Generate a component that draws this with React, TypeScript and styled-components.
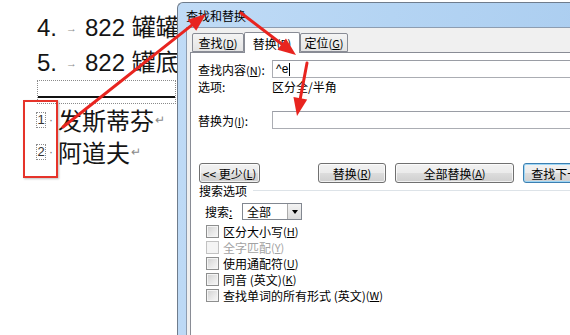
import React from "react";
import styled, { createGlobalStyle } from "styled-components";

const GlobalStyle = createGlobalStyle`
  html, body {
    margin: 0;
    padding: 0;
    background: #fff;
    overflow: hidden;
  }
  body {
    font-family: "Noto Sans CJK SC", sans-serif;
  }
`;

const Screen = styled.div`
  position: relative;
  width: 570px;
  height: 335px;
  overflow: hidden;
  display: flex;
  background: #fff;
`;

/* ---------- 文档区 ---------- */
const Doc = styled.div`
  flex: none;
  width: 177px;
  padding: 10px 0 0 37px;
  box-sizing: border-box;
  overflow: hidden;
  white-space: nowrap;
  font-family: "Liberation Sans", "Noto Sans CJK SC", sans-serif;
  color: #151515;
`;

const DocLine = styled.div`
  height: 35px;
  font-size: 24px;
  line-height: 35px;
`;

const ListNum = styled.span`
  display: inline-block;
  width: 29px;
`;

const TabMark = styled.span`
  display: inline-block;
  width: 19px;
  font-size: 11px;
  color: #8a8a8a;
  vertical-align: 4px;
`;

const TableFrame = styled.div`
  width: 139px;
  height: 24px;
  box-sizing: border-box;
  border: 1px dotted #8a8a8a;
`;

const TableRule = styled.div`
  margin-top: 15px;
  height: 2px;
  background: #111;
`;

const ListItem = styled.div`
  display: flex;
  align-items: center;
  height: 32px;
`;

const NumBox = styled.span`
  flex: none;
  margin-left: -1px;
  width: 10px;
  height: 16px;
  box-sizing: border-box;
  border: 1px dotted #8c8c8c;
  font-size: 13px;
  line-height: 14px;
  text-align: center;
  color: #333;
`;

const NumDot = styled.span`
  flex: none;
  width: 12px;
  padding-left: 3px;
  box-sizing: border-box;
  font-size: 12px;
  color: #777;
`;

const ItemText = styled.span`
  font-size: 24px;
  line-height: 32px;
  font-family: "Noto Sans CJK SC", sans-serif;
`;

const ParaMark = styled.span`
  font-size: 12px;
  color: #8a8a8a;
  margin-left: 1px;
  vertical-align: -4px;
`;

/* ---------- 对话框 ---------- */
const Dialog = styled.div`
  flex: none;
  width: 420px;
  height: 340px;
  margin-top: 2px;
  display: flex;
  flex-direction: column;
  box-sizing: border-box;
  padding-left: 8px;
  border: 1px solid #6f7c8c;
  border-right: none;
  border-radius: 6px 0 0 0;
  background: linear-gradient(100deg, #c0dbf6 0%, #b4d4f3 45%, #a9ccef 100%);
  font-family: "Noto Sans CJK SC", sans-serif;
  font-size: 12px;
  color: #000;
`;

const TitleBar = styled.div`
  height: 24px;
  display: flex;
  align-items: center;
  font-size: 12px;
`;

const Client = styled.div`
  flex: 1;
  display: flex;
  flex-direction: column;
  background: #f0f0f0;
  border-left: 1px solid #8d9db1;
  border-top: 1px solid #8d9db1;
`;

const TabRow = styled.div`
  display: flex;
  align-items: flex-end;
  height: 24px;
  padding-left: 5px;
`;

const Tab = styled.div<{ $active?: boolean; $w: number }>`
  position: relative;
  z-index: ${(p) => (p.$active ? 1 : 0)};
  width: ${(p) => p.$w}px;
  height: ${(p) => (p.$active ? 21 : 19)}px;
  margin-bottom: ${(p) => (p.$active ? -1 : 0)}px;
  box-sizing: border-box;
  display: flex;
  align-items: center;
  justify-content: center;
  border: 1px solid #898c95;
  border-bottom: ${(p) => (p.$active ? "none" : "1px solid #898c95")};
  border-radius: 2px 2px 0 0;
  background: ${(p) =>
    p.$active ? "#fff" : "linear-gradient(#f4f4f4, #e4e4e4)"};
  font-size: 12px;
  white-space: nowrap;
`;

const Key = styled.span`
  font-size: 11px;
  u {
    text-underline-offset: 1px;
  }
`;

const Panel = styled.div`
  flex: 1;
  margin-left: 3px;
  padding: 7px 0 0 7px;
  background: #fff;
  border: 1px solid #898c95;
  border-right: none;
`;

const FieldRow = styled.div<{ $gap?: number }>`
  display: flex;
  align-items: center;
  height: 18px;
  margin-top: ${(p) => p.$gap ?? 0}px;
`;

const FieldLabel = styled.span`
  flex: none;
  width: 74px;
  white-space: nowrap;
`;

const TextBox = styled.div`
  flex: 1;
  height: 18px;
  box-sizing: border-box;
  display: flex;
  align-items: center;
  padding-left: 3px;
  border: 1px solid #abadb3;
  border-top-color: #9a9da5;
  background: #fff;
  font-family: "Liberation Sans", sans-serif;
  font-size: 12px;
`;

const Caret = styled.span`
  display: inline-block;
  width: 1px;
  height: 13px;
  margin-left: 1px;
  background: #000;
`;

const OptionRow = styled.div`
  display: flex;
  align-items: center;
  height: 14px;
  margin-top: 1px;
`;

const ButtonRow = styled.div`
  display: flex;
  margin-top: 34px;
  padding-left: 1px;
`;

const Button = styled.div<{ $w: number; $ml?: number; $default?: boolean }>`
  flex: none;
  width: ${(p) => p.$w}px;
  height: 20px;
  margin-left: ${(p) => p.$ml ?? 0}px;
  box-sizing: border-box;
  display: flex;
  align-items: center;
  justify-content: center;
  white-space: nowrap;
  border: 1px solid ${(p) => (p.$default ? "#3c7fb1" : "#707070")};
  border-radius: 3px;
  background: linear-gradient(#f2f2f2 0%, #ebebeb 50%, #dddddd 51%, #cfcfcf 100%);
  box-shadow: inset 0 0 0 1px
    ${(p) => (p.$default ? "#9ed6f5" : "rgba(255, 255, 255, 0.7)")};
  font-size: 12px;
`;

const GroupHeader = styled.div`
  display: flex;
  align-items: center;
  height: 14px;
  padding-left: 1px;
  &::after {
    content: "";
    flex: 1;
    height: 1px;
    margin-left: 6px;
    background: #dde3e8;
  }
`;

const Options = styled.div`
  padding-left: 7px;
  margin-top: 6px;
`;

const SearchRow = styled.div`
  display: flex;
  align-items: center;
  height: 17px;
`;

const SearchLabel = styled.span`
  width: 37px;
  flex: none;
`;

const Select = styled.div`
  width: 60px;
  height: 17px;
  box-sizing: border-box;
  display: flex;
  align-items: center;
  justify-content: space-between;
  padding-left: 4px;
  border: 1px solid #828790;
  background: #fff;
`;

const DropButton = styled.div`
  width: 14px;
  height: 15px;
  box-sizing: border-box;
  display: flex;
  align-items: center;
  justify-content: center;
  border-left: 1px solid #acacac;
  background: linear-gradient(#f3f3f3, #dcdcdc);
  &::after {
    content: "";
    border-left: 3px solid transparent;
    border-right: 3px solid transparent;
    border-top: 4px solid #000;
  }
`;

const CheckList = styled.div`
  margin-top: 3px;
`;

const CheckRow = styled.div<{ $disabled?: boolean }>`
  display: flex;
  align-items: center;
  height: 16px;
  padding-left: 1px;
  color: ${(p) => (p.$disabled ? "#a3a3a3" : "#000")};
  white-space: nowrap;
`;

const CheckBox = styled.span<{ $disabled?: boolean }>`
  flex: none;
  width: 13px;
  height: 13px;
  box-sizing: border-box;
  margin-right: 4px;
  border: 1px solid ${(p) => (p.$disabled ? "#c2c2c2" : "#8e8f8f")};
  background: ${(p) =>
    p.$disabled
      ? "#f4f4f4"
      : "linear-gradient(135deg, #cfcfcf 0%, #e6e6e6 50%, #f8f8f8 100%)"};
  box-shadow: inset 0 0 0 1px #f4f4f4;
`;

/* ---------- 标注 ---------- */
const Marks = styled.svg`
  position: absolute;
  left: 0;
  top: 0;
  z-index: 5;
  pointer-events: none;
`;

const RedBox = styled.div`
  position: absolute;
  left: 23px;
  top: 100px;
  width: 35px;
  height: 78px;
  box-sizing: border-box;
  border: 2px solid #e6332a;
  box-shadow: 1px 1px 2px rgba(0, 0, 0, 0.25);
  z-index: 4;
`;

const RED = "#e8241f";

function Arrow({ x1, y1, x2, y2 }: { x1: number; y1: number; x2: number; y2: number }) {
  const dx = x2 - x1;
  const dy = y2 - y1;
  const len = Math.hypot(dx, dy);
  const ux = dx / len;
  const uy = dy / len;
  const hl = 18;
  const hw = 7;
  const bx = x2 - ux * hl;
  const by = y2 - uy * hl;
  const pts = `${x2},${y2} ${bx - uy * hw},${by + ux * hw} ${bx + uy * hw},${by - ux * hw}`;
  return (
    <g>
      <line x1={x1} y1={y1} x2={bx + ux * 2} y2={by + uy * 2} stroke={RED} strokeWidth={3} strokeLinecap="round" />
      <polygon points={pts} fill={RED} />
    </g>
  );
}

const checks = [
  { label: "区分大小写", key: "H" },
  { label: "全字匹配", key: "Y", disabled: true },
  { label: "使用通配符", key: "U" },
  { label: "同音 (英文)", key: "K" },
  { label: "查找单词的所有形式 (英文)", key: "W" },
];

function K({ k }: { k: string }) {
  return (
    <Key>
      (<u>{k}</u>)
    </Key>
  );
}

export default function App() {
  return (
    <Screen>
      <GlobalStyle />

      {/* 文档 */}
      <Doc>
        <DocLine>
          <ListNum>4.</ListNum>
          <TabMark>→</TabMark>822 罐罐罐底
        </DocLine>
        <DocLine>
          <ListNum>5.</ListNum>
          <TabMark>→</TabMark>822 罐底盖
        </DocLine>
        <TableFrame>
          <TableRule />
        </TableFrame>
        <ListItem>
          <NumBox>1</NumBox>
          <NumDot>·</NumDot>
          <ItemText>发斯蒂芬</ItemText>
          <ParaMark>↵</ParaMark>
        </ListItem>
        <ListItem>
          <NumBox>2</NumBox>
          <NumDot>·</NumDot>
          <ItemText>阿道夫</ItemText>
          <ParaMark>↵</ParaMark>
        </ListItem>
      </Doc>

      {/* 查找和替换 */}
      <Dialog>
        <TitleBar>查找和替换</TitleBar>
        <Client>
          <TabRow>
            <Tab $w={52}>
              查找<K k="D" />
            </Tab>
            <Tab $w={56} $active>
              替换<K k="P" />
            </Tab>
            <Tab $w={48}>
              定位<K k="G" />
            </Tab>
          </TabRow>
          <Panel>
            <FieldRow>
              <FieldLabel>
                查找内容<K k="N" />:
              </FieldLabel>
              <TextBox>
                ^e
                <Caret />
              </TextBox>
            </FieldRow>
            <OptionRow>
              <FieldLabel>选项:</FieldLabel>
              <span>区分全/半角</span>
            </OptionRow>
            <FieldRow $gap={18}>
              <FieldLabel>
                替换为<K k="I" />:
              </FieldLabel>
              <TextBox />
            </FieldRow>

            <ButtonRow>
              <Button $w={61}>
                &lt;&lt; 更少<K k="L" />
              </Button>
              <Button $w={68} $ml={58}>
                替换<K k="R" />
              </Button>
              <Button $w={119} $ml={9}>
                全部替换<K k="A" />
              </Button>
              <Button $w={90} $ml={9} $default>
                查找下一处<K k="F" />
              </Button>
            </ButtonRow>

            <GroupHeader>搜索选项</GroupHeader>
            <Options>
              <SearchRow>
                <SearchLabel>
                  搜索<u>:</u>
                </SearchLabel>
                <Select>
                  全部
                  <DropButton />
                </Select>
              </SearchRow>
              <CheckList>
                {checks.map((c) => (
                  <CheckRow key={c.key} $disabled={c.disabled}>
                    <CheckBox $disabled={c.disabled} />
                    {c.label}
                    <K k={c.key} />
                  </CheckRow>
                ))}
              </CheckList>
            </Options>
          </Panel>
        </Client>
      </Dialog>

      <RedBox />
      <Marks width={570} height={335}>
        <Arrow x1={63} y1={127} x2={206} y2={14} />
        <Arrow x1={241} y1={13} x2={296} y2={55} />
        <Arrow x1={307} y1={63} x2={297} y2={116} />
      </Marks>
    </Screen>
  );
}
